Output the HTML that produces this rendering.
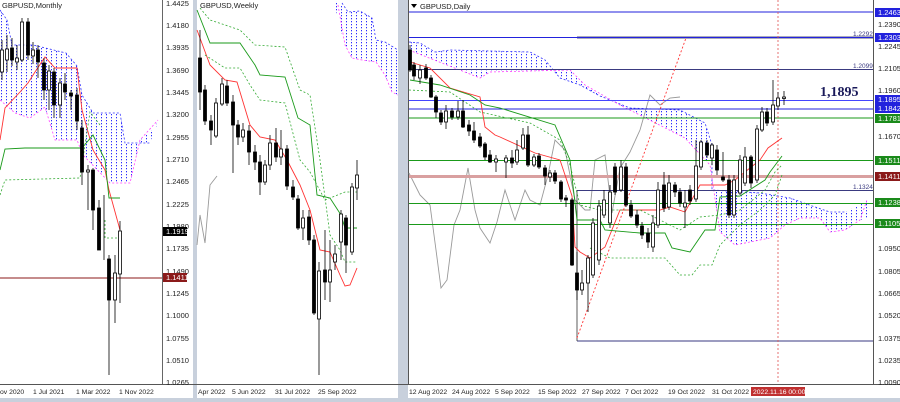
<!DOCTYPE html>
<html><head><style>
body{margin:0;width:900px;height:402px;overflow:hidden;background:#fff}
svg{display:block}
text{font-family:"Liberation Sans",sans-serif;font-size:8px;fill:#222}
.ax text{font-size:7.5px}
.dt{font-size:6.8px}
</style></head><body>
<svg width="900" height="402" viewBox="0 0 900 402" xmlns="http://www.w3.org/2000/svg">
<defs>
<pattern id="cb" width="5" height="3" patternUnits="userSpaceOnUse"><rect x="1" y="0" width="1" height="1.3" fill="#2b2bff"/></pattern>
</defs>
<rect width="900" height="402" fill="#fff"/>
<rect x="162" y="0" width="1" height="384" fill="#666"/>
<rect x="193" y="0" width="4" height="402" fill="#c8d0dc"/>
<rect x="398" y="0" width="10" height="402" fill="#c8d0dc"/>
<rect x="408" y="0" width="1" height="384" fill="#555"/>
<rect x="873" y="0" width="1" height="384" fill="#555"/>
<rect x="0" y="384" width="900" height="1" fill="#555"/>
<rect x="0" y="398" width="900" height="4" fill="#c8d0dc"/>

<!-- ===== Monthly ===== -->
<polygon points="0,10 7,20 12,45 33,45 66,53 77,66 82,95 93,113 120,113 125,143 150,143 158,120 158,125 140,140 130,183 110,183 83,155 77,140 55,140 45,107 30,118 15,113 0,100" fill="url(#cb)"/>
<polyline points="0,10 7,20 12,45 33,45 66,53 77,66 82,95 93,113 120,113 125,143 150,143" fill="none" stroke="#3030ff" stroke-dasharray="2,2" stroke-width="0.8"/>
<polyline points="0,100 15,113 30,118 45,107 55,140 77,140 83,155 110,183 130,183 140,140 158,120" fill="none" stroke="#ff40ff" stroke-dasharray="2,2" stroke-width="0.8"/>
<polyline points="0,140 5,108 20,92 28,83 35,72 45,57 55,68 77,68 82,110 93,150 105,170 109,190 120,230" fill="none" stroke="#f33" stroke-width="0.9"/>
<polyline points="0,170 5,149 25,148 82,148 93,135 105,160 109,198 120,198" fill="none" stroke="#1a9a1a" stroke-width="0.9"/>
<polyline points="0,195 5,180 80,178 90,112 100,125" fill="none" stroke="#3a3" stroke-dasharray="2,2" stroke-width="0.8"/>
<polyline points="105,220 105,238 118,238" fill="none" stroke="#3a3" stroke-dasharray="2,2" stroke-width="0.8"/>
<rect x="0" y="277.5" width="162" height="1" fill="#8b1a1a"/>
<g stroke="#000" stroke-width="0.8">
<line x1="2" y1="40" x2="2" y2="80"/><rect x="0.5" y="50" width="3" height="22" fill="#fff"/>
<line x1="7" y1="35" x2="7" y2="72"/><rect x="5.5" y="49" width="3" height="11" fill="#fff"/>
<line x1="12" y1="38" x2="12" y2="66"/><rect x="10.5" y="48" width="3" height="12" fill="#000"/>
<line x1="17" y1="45" x2="17" y2="70"/><rect x="15.5" y="58" width="3" height="4" fill="#fff"/>
<line x1="22" y1="18" x2="22" y2="62"/><rect x="20.5" y="22" width="3" height="38" fill="#fff"/>
<line x1="28" y1="18" x2="28" y2="60"/><rect x="26.5" y="22" width="3" height="33" fill="#000"/>
<line x1="33" y1="42" x2="33" y2="64"/><rect x="31.5" y="50" width="3" height="6" fill="#fff"/>
<line x1="38" y1="45" x2="38" y2="78"/><rect x="36.5" y="50" width="3" height="12" fill="#000"/>
<line x1="44" y1="58" x2="44" y2="100"/><rect x="42.5" y="63" width="3" height="27" fill="#000"/>
<line x1="49" y1="65" x2="49" y2="110"/><rect x="47.5" y="71" width="3" height="19" fill="#fff"/>
<line x1="54" y1="68" x2="54" y2="118"/><rect x="52.5" y="72" width="3" height="33" fill="#000"/>
<line x1="60" y1="78" x2="60" y2="118"/><rect x="58.5" y="83" width="3" height="22" fill="#fff"/>
<line x1="65" y1="73" x2="65" y2="100"/><rect x="63.5" y="84" width="3" height="8" fill="#000"/>
<line x1="71" y1="90" x2="71" y2="110"/><rect x="69.5" y="93" width="3" height="3" fill="#000"/>
<line x1="77" y1="88" x2="77" y2="130"/><rect x="75.5" y="95" width="3" height="26" fill="#000"/>
<line x1="82" y1="120" x2="82" y2="185"/><rect x="80.5" y="128" width="3" height="44" fill="#000"/>
<line x1="88" y1="165" x2="88" y2="210"/><rect x="86.5" y="170" width="3" height="2" fill="#fff"/>
<line x1="93" y1="168" x2="93" y2="230"/><rect x="91.5" y="170" width="3" height="40" fill="#000"/>
<line x1="99" y1="200" x2="99" y2="250"/><rect x="97.5" y="208" width="3" height="42" fill="#000"/>
<line x1="104" y1="195" x2="104" y2="260"/>
<line x1="109" y1="255" x2="109" y2="375"/><rect x="107.5" y="259" width="3" height="41" fill="#000"/>
<line x1="115" y1="255" x2="115" y2="323"/><rect x="113.5" y="273" width="3" height="27" fill="#fff"/>
<line x1="120" y1="221" x2="120" y2="303"/><rect x="118.5" y="231" width="3" height="43" fill="#fff"/>
</g>
<text x="2" y="8" style="font-size:7.5px">GBPUSD,Monthly</text>
<g class="ax">
<text x="166" y="6">1.4425</text><text x="166" y="28">1.4180</text><text x="166" y="50">1.3935</text><text x="166" y="73">1.3690</text><text x="166" y="95">1.3445</text><text x="166" y="117">1.3200</text><text x="166" y="140">1.2955</text><text x="166" y="162">1.2710</text><text x="166" y="184">1.2465</text><text x="166" y="207">1.2225</text><text x="166" y="229">1.1980</text><text x="166" y="251">1.1735</text><text x="166" y="274">1.1490</text><text x="166" y="296">1.1245</text><text x="166" y="318">1.1000</text><text x="166" y="341">1.0755</text><text x="166" y="363">1.0510</text><text x="166" y="385">1.0265</text>
<rect x="163" y="227" width="24" height="9" fill="#000"/><text x="166" y="234" style="fill:#fff">1.1919</text>
<rect x="163" y="273" width="24" height="9" fill="#8b1a1a"/><text x="166" y="280" style="fill:#fff">1.1411</text>
</g>
<text class="dt" x="0" y="394">ov 2020</text><text class="dt" x="33" y="394">1 Jul 2021</text><text class="dt" x="76" y="394">1 Mar 2022</text><text class="dt" x="119" y="394">1 Nov 2022</text>

<!-- ===== Weekly ===== -->
<polygon points="334,0 342,5 348,12 360,11 372,18 376,40 385,42 398,50 398,95 392,92 385,75 376,62 362,60 352,58 345,45 338,20" fill="url(#cb)"/>
<polyline points="342,3 348,12 360,11 372,18 376,40 385,42 398,50" fill="none" stroke="#3030ff" stroke-dasharray="2,2" stroke-width="0.8"/>
<polyline points="338,5 345,45 352,58 362,60 376,62 385,75 392,92 398,95" fill="none" stroke="#ff40ff" stroke-dasharray="2,2" stroke-width="0.8"/>
<polyline points="197,245 200,215 205,243 210,185 217,176" fill="none" stroke="#999" stroke-width="0.9"/>
<polyline points="197,30 210,65 225,80 237,82 250,125 260,137 275,140 287,160 300,185 310,210 320,250 330,252 340,275 345,286 350,285 357,268" fill="none" stroke="#f33" stroke-width="0.9"/>
<polyline points="197,10 210,43 240,43 255,65 260,75 285,77 298,118 310,125 317,195 330,198 341,215 345,228 357,228" fill="none" stroke="#1a9a1a" stroke-width="0.9"/>
<polyline points="200,8 210,20 240,30 255,45 285,47 300,90 310,95 320,160 330,235 340,250 345,262 357,262" fill="none" stroke="#3a3" stroke-dasharray="2,2" stroke-width="0.8"/>
<polyline points="205,55 225,68 240,68 250,85 260,100 285,103 300,160 310,172 325,200 345,192 357,192" fill="none" stroke="#3a3" stroke-dasharray="2,2" stroke-width="0.8"/>
<g stroke="#000" stroke-width="0.8">
<line x1="200" y1="30" x2="200" y2="110"/><rect x="198.5" y="58" width="3" height="34" fill="#000"/>
<line x1="205" y1="85" x2="205" y2="125"/><rect x="203.5" y="90" width="3" height="31" fill="#000"/>
<line x1="211" y1="115" x2="211" y2="145"/><rect x="209.5" y="121" width="3" height="9" fill="#000"/>
<line x1="216" y1="98" x2="216" y2="138"/><rect x="214.5" y="103" width="3" height="33" fill="#fff"/>
<line x1="222" y1="78" x2="222" y2="106"/><rect x="220.5" y="84" width="3" height="20" fill="#fff"/>
<line x1="227" y1="80" x2="227" y2="106"/><rect x="225.5" y="86" width="3" height="17" fill="#000"/>
<line x1="233" y1="95" x2="233" y2="173"/><rect x="231.5" y="102" width="3" height="23" fill="#000"/>
<line x1="238" y1="120" x2="238" y2="145"/><rect x="236.5" y="125" width="3" height="12" fill="#000"/>
<line x1="243" y1="123" x2="243" y2="142"/><rect x="241.5" y="130" width="3" height="7" fill="#fff"/>
<line x1="249" y1="125" x2="249" y2="165"/><rect x="247.5" y="131" width="3" height="21" fill="#000"/>
<line x1="255" y1="145" x2="255" y2="170"/><rect x="253.5" y="152" width="3" height="10" fill="#000"/>
<line x1="260" y1="155" x2="260" y2="195"/><rect x="258.5" y="162" width="3" height="20" fill="#000"/>
<line x1="265" y1="160" x2="265" y2="185"/><rect x="263.5" y="165" width="3" height="17" fill="#fff"/>
<line x1="270" y1="135" x2="270" y2="170"/><rect x="268.5" y="143" width="3" height="22" fill="#fff"/>
<line x1="276" y1="128" x2="276" y2="162"/><rect x="274.5" y="143" width="3" height="14" fill="#000"/>
<line x1="281" y1="130" x2="281" y2="165"/><rect x="279.5" y="149" width="3" height="8" fill="#fff"/>
<line x1="287" y1="145" x2="287" y2="190"/><rect x="285.5" y="149" width="3" height="37" fill="#000"/>
<line x1="293" y1="180" x2="293" y2="200"/><rect x="291.5" y="187" width="3" height="10" fill="#000"/>
<line x1="298" y1="195" x2="298" y2="230"/><rect x="296.5" y="199" width="3" height="29" fill="#000"/>
<line x1="303" y1="210" x2="303" y2="240"/><rect x="301.5" y="218" width="3" height="10" fill="#fff"/>
<line x1="309" y1="210" x2="309" y2="245"/><rect x="307.5" y="217" width="3" height="23" fill="#000"/>
<line x1="314" y1="235" x2="314" y2="315"/><rect x="312.5" y="240" width="3" height="73" fill="#000"/>
<line x1="319" y1="262" x2="319" y2="375"/><rect x="317.5" y="271" width="3" height="48" fill="#fff"/>
<line x1="325" y1="230" x2="325" y2="300"/><rect x="323.5" y="270" width="3" height="12" fill="#000"/>
<line x1="330" y1="240" x2="330" y2="302"/><rect x="328.5" y="270" width="3" height="12" fill="#fff"/>
<line x1="335" y1="245" x2="335" y2="270"/><rect x="333.5" y="254" width="3" height="8" fill="#fff"/>
<line x1="341" y1="210" x2="341" y2="260"/><rect x="339.5" y="214" width="3" height="28" fill="#fff"/>
<line x1="346" y1="215" x2="346" y2="273"/><rect x="344.5" y="218" width="3" height="27" fill="#000"/>
<line x1="352" y1="183" x2="352" y2="255"/><rect x="350.5" y="187" width="3" height="65" fill="#fff"/>
<line x1="357" y1="160" x2="357" y2="200"/><rect x="355.5" y="175" width="3" height="13" fill="#fff"/>
</g>
<text x="200" y="8" style="font-size:7.5px">GBPUSD,Weekly</text>
<text class="dt" x="198" y="394">Apr 2022</text><text class="dt" x="232" y="394">5 Jun 2022</text><text class="dt" x="275" y="394">31 Jul 2022</text><text class="dt" x="318" y="394">25 Sep 2022</text>

<!-- ===== Daily ===== -->
<polygon points="409,42 420,43 435,52 450,50 530,52 545,60 560,78 580,85 600,96 630,108 680,110 705,123 710,140 712,190 760,193 790,198 815,207 830,212 845,212 867,200 867,218 860,220 845,230 830,232 820,218 800,218 785,225 770,238 750,242 735,245 720,232 710,165 685,138 620,105 585,85 570,70 490,72 480,78 409,50" fill="url(#cb)"/>
<polyline points="409,42 420,43 435,52 450,50 530,52 545,60 560,78 580,85 600,96 630,108 680,110 705,123 712,145 712,190 760,193 790,198 815,207 830,212 845,212" fill="none" stroke="#3030ff" stroke-dasharray="2,2" stroke-width="0.8"/>
<polyline points="409,50 480,78 490,72 570,70 585,85 620,105 685,138 710,165 720,232 735,245 750,242 770,238 785,225 800,218 820,218 830,232 845,230 860,220 867,200" fill="none" stroke="#ff40ff" stroke-dasharray="2,2" stroke-width="0.8"/>
<polyline points="409,173 420,195 430,205 436,250 441,288 447,280 454,225 460,210 468,168 475,210 480,228 490,243 497,222 505,190 515,220 525,190 530,200 540,205 548,175 555,140 565,150 575,200 585,210 590,210 595,160 605,155 612,213 620,168 630,152 640,130 650,95 660,105 670,98 680,97" fill="none" stroke="#999" stroke-width="0.9"/>
<rect x="409" y="11.5" width="464" height="1" fill="#2222dd"/>
<rect x="577" y="36" width="296" height="3" fill="#aab"/>
<rect x="409" y="37" width="464" height="1" fill="#2222dd"/>
<rect x="409" y="69" width="464" height="1" fill="#3a3a80"/>
<rect x="409" y="100" width="464" height="1" fill="#4444ff"/>
<rect x="409" y="108.5" width="464" height="1" fill="#2222dd"/>
<rect x="409" y="117.5" width="464" height="1" fill="#1a9a1a"/>
<rect x="409" y="160" width="464" height="1" fill="#1a9a1a"/>
<rect x="409" y="175" width="464" height="3" fill="#d9a0a0"/>
<rect x="577" y="190" width="296" height="1" fill="#3a3a80"/>
<rect x="409" y="203" width="464" height="1" fill="#1a9a1a"/>
<rect x="409" y="224" width="464" height="1" fill="#1a9a1a"/>
<rect x="577" y="340.5" width="296" height="1" fill="#3a3a80"/>
<line x1="577" y1="190" x2="577" y2="341" stroke="#333" stroke-width="0.8"/>
<line x1="778" y1="0" x2="778" y2="384" stroke="#e05050" stroke-dasharray="2,2" stroke-width="0.8"/>
<line x1="577" y1="338" x2="686" y2="38" stroke="#f33" stroke-dasharray="2,2" stroke-width="0.9"/>
<polyline points="410,62 430,68 450,88 480,97 485,127 495,135 500,137 535,153 560,160 572,196 575,247 580,252 590,258 605,247 620,210 660,210 670,207 685,212 700,185 725,185 735,180 760,160 768,148 782,138" fill="none" stroke="#f33" stroke-width="0.9"/>
<polyline points="410,80 440,85 470,95 485,105 500,108 555,125 570,160 577,220 600,220 605,230 640,233 665,233 672,248 690,252 705,230 715,230 720,197 740,196 765,180 770,172 782,156" fill="none" stroke="#1a9a1a" stroke-width="0.9"/>
<polyline points="409,90 450,92 480,112 530,123 560,140 570,165 580,205 600,210 640,210 660,220 680,230 700,217 720,215 740,210 765,190 775,172 782,165" fill="none" stroke="#3a3" stroke-dasharray="2,2" stroke-width="0.8"/>
<polyline points="590,248 610,258 665,258 680,275 692,275 700,265 712,265 720,245 740,225 760,210 775,195 782,175" fill="none" stroke="#3a3" stroke-dasharray="2,2" stroke-width="0.8"/>
<g stroke="#000" stroke-width="0.8">
<line x1="410" y1="45" x2="410" y2="72"/><rect x="408.5" y="50" width="3" height="20" fill="#000"/>
<line x1="414" y1="62" x2="414" y2="80"/><rect x="412.5" y="65" width="3" height="11" fill="#000"/>
<line x1="420" y1="65" x2="420" y2="84"/><rect x="418.5" y="70" width="3" height="8" fill="#fff"/>
<line x1="426" y1="64" x2="426" y2="80"/><rect x="424.5" y="68" width="3" height="10" fill="#000"/>
<line x1="431" y1="75" x2="431" y2="98"/><rect x="429.5" y="78" width="3" height="19" fill="#000"/>
<line x1="436" y1="95" x2="436" y2="118"/><rect x="434.5" y="97" width="3" height="15" fill="#000"/>
<line x1="441" y1="110" x2="441" y2="125"/><rect x="439.5" y="113" width="3" height="9" fill="#000"/>
<line x1="446" y1="105" x2="446" y2="129"/><rect x="444.5" y="111" width="3" height="11" fill="#fff"/>
<line x1="452" y1="108" x2="452" y2="120"/><rect x="450.5" y="111" width="3" height="6" fill="#000"/>
<line x1="458" y1="101" x2="458" y2="120"/><rect x="456.5" y="111" width="3" height="6" fill="#fff"/>
<line x1="463" y1="100" x2="463" y2="128"/><rect x="461.5" y="111" width="3" height="16" fill="#000"/>
<line x1="469" y1="120" x2="469" y2="136"/><rect x="467.5" y="125" width="3" height="6" fill="#000"/>
<line x1="474" y1="122" x2="474" y2="143"/><rect x="472.5" y="131" width="3" height="9" fill="#000"/>
<line x1="480" y1="133" x2="480" y2="148"/><rect x="478.5" y="137" width="3" height="9" fill="#000"/>
<line x1="485" y1="142" x2="485" y2="160"/><rect x="483.5" y="144" width="3" height="13" fill="#000"/>
<line x1="490" y1="150" x2="490" y2="163"/><rect x="488.5" y="155" width="3" height="7" fill="#000"/>
<line x1="496" y1="155" x2="496" y2="172"/><rect x="494.5" y="159" width="3" height="3" fill="#fff"/>
<line x1="506" y1="155" x2="506" y2="178"/><rect x="504.5" y="158" width="3" height="4" fill="#fff"/>
<line x1="512" y1="150" x2="512" y2="168"/><rect x="510.5" y="158" width="3" height="5" fill="#000"/>
<line x1="517" y1="140" x2="517" y2="165"/><rect x="515.5" y="150" width="3" height="12" fill="#fff"/>
<line x1="523" y1="128" x2="523" y2="150"/><rect x="521.5" y="135" width="3" height="13" fill="#fff"/>
<line x1="528" y1="126" x2="528" y2="167"/><rect x="526.5" y="135" width="3" height="30" fill="#000"/>
<line x1="534" y1="154" x2="534" y2="167"/><rect x="532.5" y="157" width="3" height="8" fill="#fff"/>
<line x1="539" y1="153" x2="539" y2="169"/><rect x="537.5" y="156" width="3" height="11" fill="#000"/>
<line x1="545" y1="165" x2="545" y2="185"/><rect x="543.5" y="168" width="3" height="8" fill="#000"/>
<line x1="550" y1="170" x2="550" y2="182"/><rect x="548.5" y="173" width="3" height="4" fill="#fff"/>
<line x1="555" y1="170" x2="555" y2="184"/><rect x="553.5" y="173" width="3" height="8" fill="#000"/>
<line x1="561" y1="180" x2="561" y2="202"/><rect x="559.5" y="182" width="3" height="17" fill="#000"/>
<line x1="566" y1="195" x2="566" y2="207"/><rect x="564.5" y="198" width="3" height="2" fill="#000"/>
<line x1="572" y1="198" x2="572" y2="266"/><rect x="570.5" y="200" width="3" height="65" fill="#000"/>
<line x1="577" y1="252" x2="577" y2="300"/><rect x="575.5" y="273" width="3" height="17" fill="#000"/>
<line x1="582" y1="270" x2="582" y2="295"/><rect x="580.5" y="283" width="3" height="7" fill="#fff"/>
<line x1="588" y1="255" x2="588" y2="312"/><rect x="586.5" y="258" width="3" height="25" fill="#fff"/>
<line x1="593" y1="218" x2="593" y2="278"/><rect x="591.5" y="223" width="3" height="52" fill="#fff"/>
<line x1="599" y1="200" x2="599" y2="265"/><rect x="597.5" y="206" width="3" height="54" fill="#fff"/>
<line x1="604" y1="190" x2="604" y2="218"/><rect x="602.5" y="200" width="3" height="15" fill="#fff"/>
<line x1="610" y1="185" x2="610" y2="228"/><rect x="608.5" y="192" width="3" height="31" fill="#fff"/>
<line x1="615" y1="163" x2="615" y2="195"/><rect x="613.5" y="167" width="3" height="25" fill="#000"/>
<line x1="621" y1="160" x2="621" y2="192"/><rect x="619.5" y="167" width="3" height="23" fill="#fff"/>
<line x1="626" y1="163" x2="626" y2="207"/><rect x="624.5" y="167" width="3" height="38" fill="#000"/>
<line x1="631" y1="200" x2="631" y2="218"/><rect x="629.5" y="205" width="3" height="11" fill="#000"/>
<line x1="637" y1="210" x2="637" y2="228"/><rect x="635.5" y="215" width="3" height="10" fill="#000"/>
<line x1="642" y1="222" x2="642" y2="239"/><rect x="640.5" y="226" width="3" height="9" fill="#000"/>
<line x1="648" y1="228" x2="648" y2="248"/><rect x="646.5" y="233" width="3" height="9" fill="#000"/>
<line x1="653" y1="215" x2="653" y2="252"/><rect x="651.5" y="223" width="3" height="24" fill="#fff"/>
<line x1="658" y1="182" x2="658" y2="228"/><rect x="656.5" y="190" width="3" height="35" fill="#fff"/>
<line x1="664" y1="172" x2="664" y2="212"/><rect x="662.5" y="185" width="3" height="23" fill="#000"/>
<line x1="669" y1="175" x2="669" y2="210"/><rect x="667.5" y="183" width="3" height="24" fill="#fff"/>
<line x1="675" y1="182" x2="675" y2="197"/><rect x="673.5" y="185" width="3" height="7" fill="#000"/>
<line x1="680" y1="188" x2="680" y2="207"/><rect x="678.5" y="192" width="3" height="11" fill="#000"/>
<line x1="685" y1="190" x2="685" y2="228"/><rect x="683.5" y="203" width="3" height="4" fill="#fff"/>
<line x1="690" y1="185" x2="690" y2="205"/><rect x="688.5" y="190" width="3" height="11" fill="#000"/>
<line x1="696" y1="140" x2="696" y2="202"/><rect x="694.5" y="166" width="3" height="33" fill="#fff"/>
<line x1="701" y1="140" x2="701" y2="170"/><rect x="699.5" y="142" width="3" height="25" fill="#fff"/>
<line x1="707" y1="140" x2="707" y2="158"/><rect x="705.5" y="143" width="3" height="12" fill="#000"/>
<line x1="712" y1="143" x2="712" y2="165"/><rect x="710.5" y="145" width="3" height="13" fill="#fff"/>
<line x1="717" y1="145" x2="717" y2="175"/><rect x="715.5" y="150" width="3" height="20" fill="#000"/>
<line x1="723" y1="152" x2="723" y2="182"/><rect x="721.5" y="177" width="3" height="3" fill="#000"/>
<line x1="729" y1="175" x2="729" y2="218"/><rect x="727.5" y="180" width="3" height="35" fill="#000"/>
<line x1="734" y1="175" x2="734" y2="218"/><rect x="732.5" y="180" width="3" height="35" fill="#fff"/>
<line x1="740" y1="155" x2="740" y2="195"/><rect x="738.5" y="160" width="3" height="33" fill="#fff"/>
<line x1="745" y1="147" x2="745" y2="186"/><rect x="743.5" y="157" width="3" height="26" fill="#fff"/>
<line x1="751" y1="155" x2="751" y2="188"/><rect x="749.5" y="157" width="3" height="26" fill="#000"/>
<line x1="757" y1="125" x2="757" y2="183"/><rect x="755.5" y="129" width="3" height="51" fill="#fff"/>
<line x1="762" y1="107" x2="762" y2="132"/><rect x="760.5" y="112" width="3" height="18" fill="#fff"/>
<line x1="767" y1="108" x2="767" y2="126"/><rect x="765.5" y="112" width="3" height="11" fill="#000"/>
<line x1="773" y1="80" x2="773" y2="125"/><rect x="771.5" y="105" width="3" height="17" fill="#fff"/>
<line x1="778" y1="92" x2="778" y2="110"/><rect x="776.5" y="98" width="3" height="8" fill="#fff"/>
<line x1="784" y1="91" x2="784" y2="105"/><rect x="782.5" y="97" width="3" height="1.5" fill="#fff"/>
</g>
<polygon points="411,4 417,4 414,8" fill="#000"/>
<text x="420" y="9" style="font-size:7.5px">GBPUSD,Daily</text>
<text x="820" y="96" style="font-family:'Liberation Serif',serif;font-size:14px;font-weight:bold;fill:#1a1a5a">1,1895</text>
<text x="853" y="36" style="font-size:6.5px;fill:#3a3a80">1.2292</text>
<text x="853" y="68" style="font-size:6.5px;fill:#3a3a80">1.2099</text>
<text x="853" y="189" style="font-size:6.5px;fill:#3a3a80">1.1324</text>
<g class="ax">
<rect x="875" y="8" width="25" height="9" fill="#2222dd"/><text x="878" y="15" style="fill:#fff">1.2463</text>
<text x="878" y="27">1.2390</text>
<rect x="875" y="33" width="25" height="9" fill="#2222dd"/><text x="878" y="40" style="fill:#fff">1.2303</text>
<text x="878" y="49">1.2245</text><text x="878" y="71">1.2105</text><text x="878" y="93">1.1960</text>
<rect x="875" y="95" width="25" height="9" fill="#2222dd"/><text x="878" y="102" style="fill:#fff">1.1895</text>
<rect x="875" y="104" width="25" height="9" fill="#2222dd"/><text x="878" y="111" style="fill:#fff">1.1842</text>
<rect x="875" y="114" width="25" height="9" fill="#1a8a1a"/><text x="878" y="121" style="fill:#fff">1.1781</text>
<text x="878" y="139">1.1670</text>
<rect x="875" y="156" width="25" height="9" fill="#1a8a1a"/><text x="878" y="163" style="fill:#fff">1.1511</text>
<rect x="875" y="172" width="25" height="9" fill="#8b1a1a"/><text x="878" y="179" style="fill:#fff">1.1411</text>
<rect x="875" y="198" width="25" height="9" fill="#1a8a1a"/><text x="878" y="205" style="fill:#fff">1.1238</text>
<rect x="875" y="219" width="25" height="9" fill="#1a8a1a"/><text x="878" y="226" style="fill:#fff">1.1105</text>
<text x="878" y="251">1.0950</text><text x="878" y="274">1.0805</text><text x="878" y="296">1.0665</text><text x="878" y="318">1.0520</text><text x="878" y="341">1.0375</text><text x="878" y="363">1.0235</text><text x="878" y="385">1.0090</text>
</g>
<text class="dt" x="409" y="394">12 Aug 2022</text><text class="dt" x="452" y="394">24 Aug 2022</text><text class="dt" x="495" y="394">5 Sep 2022</text><text class="dt" x="538" y="394">15 Sep 2022</text><text class="dt" x="582" y="394">27 Sep 2022</text><text class="dt" x="625" y="394">7 Oct 2022</text><text class="dt" x="668" y="394">19 Oct 2022</text><text class="dt" x="712" y="394">31 Oct 2022</text>
<rect x="751" y="387" width="54" height="9" fill="#c03030"/><text class="dt" x="753" y="394" style="fill:#fff">2022.11.16 00:00</text>
</svg>
</body></html>
